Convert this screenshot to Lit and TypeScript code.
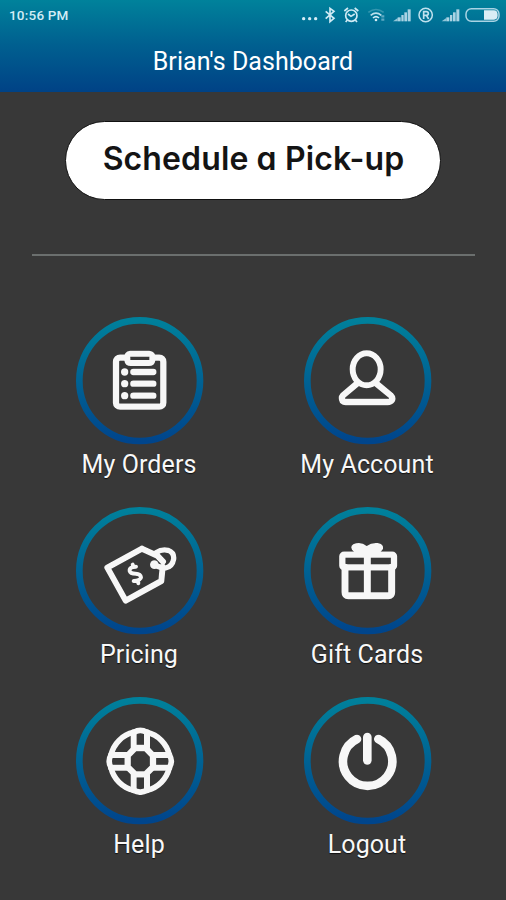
import { LitElement, html, svg, css, SVGTemplateResult } from "lit";
import { customElement, property } from "lit/decorators.js";

interface StatusIcon {
  x: number;
  w: number;
  art: SVGTemplateResult;
}

const signal = (x: number) => svg`
  <g fill="#a9d3e3">
    <path d="M${x} 64 L${x + 14} 54 V64Z" opacity=".85"/>
    <rect x=${x + 14} y="52" width="9" height="12"/>
    <rect x=${x + 25} y="45" width="7" height="19"/>
    <rect x=${x + 34} y="37" width="8" height="27"/>
    <rect x=${x + 44} y="28" width="9" height="36"/>
  </g>`;

const STATUS: StatusIcon[] = [
  { x: 30, w: 70, art: svg`<g fill="#d5edf6"><circle cx="41" cy="56" r="5"/><circle cx="59" cy="56" r="5"/><circle cx="77" cy="56" r="5"/></g>` },
  { x: 100, w: 50, art: svg`<path d="M108 34 L133 55 L121 65 V25 L133 34 L108 56" fill="none" stroke="#cfeaf4" stroke-width="5"/>` },
  { x: 150, w: 70, art: svg`<g fill="none" stroke="#cfeaf4" stroke-width="5"><circle cx="184" cy="47" r="17"/><path d="M174 42 L183 49 L194 42M163 33 L174 24M205 33 L194 24M172 60 L167 66M196 60 L201 66"/></g>` },
  { x: 220, w: 80, art: svg`<g fill="none" stroke="#cfeaf4" stroke-width="5"><path d="M236 37 Q259 20 282 37" opacity=".25"/><path d="M243 46 Q259 33 275 46" opacity=".9"/><path d="M250 54 Q259 46 268 54"/></g><circle cx="259" cy="60" r="4" fill="#d5edf6"/><path d="M275 49 H284 M275 59 H284" stroke="#9ccbe0" stroke-width="7" opacity=".6"/>` },
  { x: 300, w: 76, art: signal(309) },
  { x: 376, w: 68, art: svg`<g fill="none" stroke="#bfe1ee"><circle cx="408" cy="45" r="20" stroke-width="4.5"/><path d="M402 57 V35 H410 Q416 35 416 40.500 Q416 46 410 46 H402 M410 46 L417 57" stroke-width="5"/></g>` },
  { x: 444, w: 72, art: signal(455) },
  { x: 516, w: 132, art: svg`<rect x="528" y="26" width="99" height="38" rx="16" fill="none" stroke="#a9d3e4" stroke-width="4.500"/><path d="M582 31 H612 Q623 31 623 45 Q623 59 612 59 H582Z" fill="#d9edf5"/>` },
];

/* Glyphs share the 420-unit canvas of the surrounding ring. */
const GLYPHS: Record<string, SVGTemplateResult> = {
  orders: svg`
    <rect x="138" y="143" width="142" height="147" rx="12" stroke-width="19"/>
    <path d="M181 131 H237 Q249 132 247 144 V151 Q246 159 237 159 H182 Q173 159 172 151 V144 Q170 132 181 131Z" stroke-width="18" class="knock"/>
    <path d="M190 186 H250M190 221 H250M190 257 H250" stroke-width="19"/>
    <g class="solid"><circle cx="164" cy="186" r="11"/><circle cx="164" cy="221" r="11"/><circle cx="164" cy="257" r="11"/></g>`,
  account: svg`
    <ellipse cx="206" cy="178" rx="42" ry="48" stroke-width="18"/>
    <path d="M179 219 L135 256 Q129 263 134 273 Q137 276 143 276 H269 Q278 276 282 270 Q285 263 279 257 L233 219" stroke-width="19"/>`,
  pricing: svg`
    <path d="M216 146 L112 203 L167 302 L274 243 L278 200 M216 146 L262 167 L279 185" stroke-width="18"/>
    <circle cx="253" cy="194" r="13" class="solid"/>
    <path d="M258 158 Q276 146 294 151 Q313 158 311 177 Q307 200 287 204 Q277 206 255 195" stroke-width="16"/>
    <path d="M198 200 Q177 201 179 213 Q181 221 197 221 Q212 222 213 232 Q213 241 191 243 M190 200 L188 194 M204 242 L205 250" stroke-width="12"/>`,
  gift: svg`
    <rect x="133" y="164" width="155" height="38" rx="5" stroke-width="19"/>
    <path d="M141 202 V277 Q141 287 151 287 H271 Q281 287 281 277 V202M208 156 V285" stroke-width="21"/>
    <path d="M206 138 Q192 126 174 130 Q154 135 162 149 Q168 157 179 164 H237 Q249 157 255 147 Q258 132 239 129 Q220 127 206 138Z" class="solid"/>`,
  help: svg`
    <path d="M191 127 Q211 115 231 127 A90 90 0 0 1 298 195 Q310 213 298 233 A90 90 0 0 1 231 301 Q211 312 191 301 A90 90 0 0 1 123 233 Q112 213 123 195 A90 90 0 0 1 191 127Z" stroke-width="17"/>
    <path d="M195 174 H227 L249 197 V231 L227 253 H195 L173 231 V197Z" stroke-width="19"/>
    <path d="M191 127 V172M231 127 V172M191 255 V301M231 255 V301M123 195 H170M123 233 H170M252 195 H298M252 233 H298" stroke-width="18"/>`,
  logout: svg`
    <path d="M177 147 A74 74 0 1 0 241 147" stroke-width="26"/>
    <path d="M208 141 V211" stroke-width="26"/>`,
};

@customElement("dash-tile")
export class DashTile extends LitElement {
  @property() icon = "";
  @property() label = "";

  static styles = css`
    :host { display: flex; flex-direction: column; align-items: center; height: 190px; }
    .ring { display: block; width: 140px; height: 140px; }
    .glyph { fill: none; stroke: #f7f7f7; stroke-linecap: round; stroke-linejoin: round; filter: drop-shadow(0 0 2px #111); }
    .knock { fill: #383838; }
    .solid { fill: #f7f7f7; stroke: none; }
    .label { margin-right: 2px; font-size: 25px; line-height: 30px; letter-spacing: 0.1px; white-space: nowrap; color: #f8f8f8; text-shadow: 0 1px 1px #111; }
  `;

  render() {
    return html`
      <svg class="ring" viewBox="0 0 420 420">
        <defs>
          <linearGradient id="edge" x1="0" y1="0" x2="0" y2="1">
            <stop offset="0" stop-color="#00809b" />
            <stop offset="1" stop-color="#00458c" />
          </linearGradient>
        </defs>
        <circle cx="209" cy="212" r="181" fill="none" stroke="url(#edge)" stroke-width="20" />
        <g class="glyph">${GLYPHS[this.icon]}</g>
      </svg>
      <span class="label">${this.label}</span>
    `;
  }
}

@customElement("app-root")
export class AppRoot extends LitElement {
  static styles = css`
    :host { display: block; width: 506px; height: 900px; overflow: hidden; background: #383838; font-family: Roboto, "Liberation Sans", sans-serif; color: #fff; }
    .header { height: 92px; background: linear-gradient(#00829b, #006090 48%, #004286); }
    .status { display: flex; justify-content: space-between; height: 30px; padding-left: 9px; }
    .time { font-size: 13.5px; font-weight: 500; line-height: 30px; letter-spacing: 0.2px; color: #d3edf5; }
    .icons { display: flex; }
    .icons svg { display: block; height: 30px; }
    .title { margin: 0; text-align: center; font-size: 25px; font-weight: 400; line-height: 30px; letter-spacing: 0.05px; padding-top: 17px; }
    .action { display: flex; justify-content: center; padding-top: 29px; }
    .pickup { box-sizing: border-box; width: 376px; height: 79px; padding: 0 0 5px 1px; border: 1px solid #111; border-radius: 40px; background: #fff; color: #141414; font-family: Inter, "Liberation Sans", sans-serif; font-size: 32px; font-weight: 600; letter-spacing: 0.12px; font-feature-settings: "cv11" 1; white-space: nowrap; }
    .rule { height: 2px; margin: 54px 31px 0 32px; background: #6b6f6e; border: 0; }
    .grid { display: grid; grid-template-columns: 228px 228px; margin: 54px 0 0 26px; }
  `;

  render() {
    return html`
      <header class="header">
        <div class="status">
          <span class="time">10:56 PM</span>
          <div class="icons">
            ${STATUS.map((s) => html`<svg width=${s.w / 3} viewBox="${s.x} 0 ${s.w} 90">${s.art}</svg>`)}
          </div>
        </div>
        <h1 class="title">Brian's Dashboard</h1>
      </header>
      <div class="action"><button class="pickup">Schedule a Pick-up</button></div>
      <hr class="rule" />
      <main class="grid">
        <dash-tile icon="orders" label="My Orders"></dash-tile>
        <dash-tile icon="account" label="My Account"></dash-tile>
        <dash-tile icon="pricing" label="Pricing"></dash-tile>
        <dash-tile icon="gift" label="Gift Cards"></dash-tile>
        <dash-tile icon="help" label="Help"></dash-tile>
        <dash-tile icon="logout" label="Logout"></dash-tile>
      </main>
    `;
  }
}
